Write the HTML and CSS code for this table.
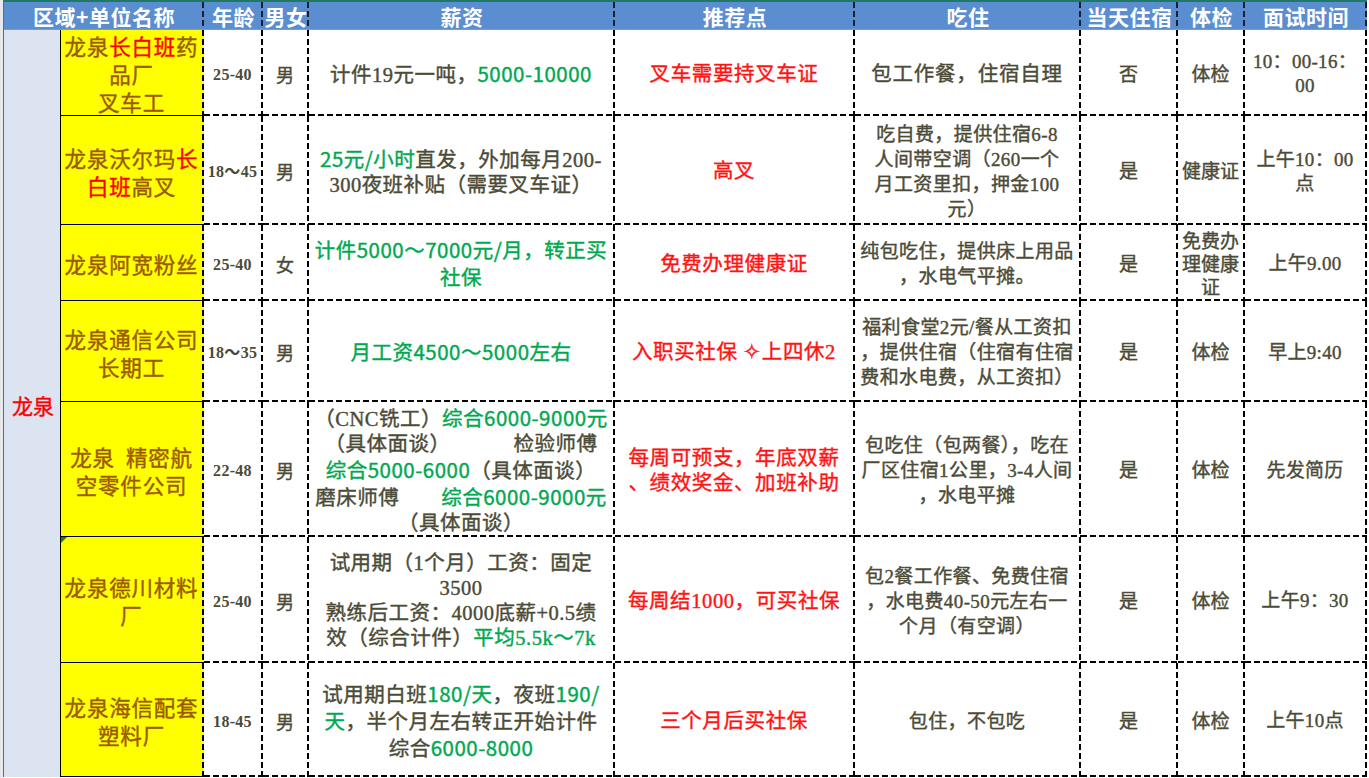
FILE: index.html
```html
<!DOCTYPE html>
<html lang="zh">
<head>
<meta charset="utf-8">
<title>龙泉招聘</title>
<link rel="stylesheet" href="styles.css">
</head>
<body>
<div class="page">
  <div class="strip"></div>
  <div class="sheet">
    <div class="h h-name">区域+单位名称</div>
    <div class="h">年龄</div>
    <div class="h">男女</div>
    <div class="h">薪资</div>
    <div class="h">推荐点</div>
    <div class="h">吃住</div>
    <div class="h">当天住宿</div>
    <div class="h">体检</div>
    <div class="h">面试时间</div>

    <div class="rg">龙泉</div>

    <!-- row 1 -->
    <div class="nm"><p>龙泉<span class="r">长白班</span>药<br>品厂<br>叉车工</p></div>
    <div class="c age"><p>25-40</p></div>
    <div class="c sex"><p>男</p></div>
    <div class="c sal"><p>计件19元一吨，<span class="g">5000-10000</span></p></div>
    <div class="c rec"><p>叉车需要持叉车证</p></div>
    <div class="c eat big"><p>包工作餐，住宿自理</p></div>
    <div class="c day"><p>否</p></div>
    <div class="c chk"><p>体检</p></div>
    <div class="c time"><p>10：00-16：<br>00</p></div>

    <!-- row 2 -->
    <div class="nm"><p>龙泉沃尔玛<span class="r">长</span><br><span class="r">白班</span>高叉</p></div>
    <div class="c age"><p>18～45</p></div>
    <div class="c sex"><p>男</p></div>
    <div class="c sal"><p><span class="g">25元/小时</span>直发，外加每月200-<br>300夜班补贴（需要叉车证）</p></div>
    <div class="c rec"><p>高叉</p></div>
    <div class="c eat"><p>吃自费，提供住宿6-8<br>人间带空调（260一个<br>月工资里扣，押金100<br>元）</p></div>
    <div class="c day"><p>是</p></div>
    <div class="c chk"><p>健康证</p></div>
    <div class="c time"><p>上午10：00<br>点</p></div>

    <!-- row 3 -->
    <div class="nm"><p>龙泉阿宽粉丝</p></div>
    <div class="c age"><p>25-40</p></div>
    <div class="c sex"><p>女</p></div>
    <div class="c sal"><p><span class="g">计件5000～7000元/月，转正买<br>社保</span></p></div>
    <div class="c rec"><p>免费办理健康证</p></div>
    <div class="c eat"><p>纯包吃住，提供床上用品<br>，水电气平摊。</p></div>
    <div class="c day"><p>是</p></div>
    <div class="c chk tight"><p>免费办<br>理健康<br>证</p></div>
    <div class="c time"><p>上午9.00</p></div>

    <!-- row 4 -->
    <div class="nm"><p>龙泉通信公司<br>长期工</p></div>
    <div class="c age"><p>18～35</p></div>
    <div class="c sex"><p>男</p></div>
    <div class="c sal"><p><span class="g">月工资4500～5000左右</span></p></div>
    <div class="c rec"><p>入职买社保 ✧上四休2</p></div>
    <div class="c eat"><p>福利食堂2元/餐从工资扣<br>，提供住宿（住宿有住宿<br>费和水电费，从工资扣）</p></div>
    <div class="c day"><p>是</p></div>
    <div class="c chk"><p>体检</p></div>
    <div class="c time"><p>早上9:40</p></div>

    <!-- row 5 -->
    <div class="nm"><p>龙泉&nbsp;&nbsp;精密航<br>空零件公司</p></div>
    <div class="c age"><p>22-48</p></div>
    <div class="c sex"><p>男</p></div>
    <div class="c sal"><p>（CNC铣工）<span class="g">综合6000-9000元</span><br>（具体面谈）&emsp;&emsp;&emsp;检验师傅<br><span class="g">综合5000-6000</span>（具体面谈）<br>磨床师傅&emsp;&emsp;<span class="g">综合6000-9000元</span><br>（具体面谈）</p></div>
    <div class="c rec"><p>每周可预支，年底双薪<br>、绩效奖金、加班补助</p></div>
    <div class="c eat"><p>包吃住（包两餐），吃在<br>厂区住宿1公里，3-4人间<br>，水电平摊</p></div>
    <div class="c day"><p>是</p></div>
    <div class="c chk"><p>体检</p></div>
    <div class="c time"><p>先发简历</p></div>

    <!-- row 6 -->
    <div class="nm flag"><p>龙泉德川材料<br>厂</p></div>
    <div class="c age"><p>25-40</p></div>
    <div class="c sex"><p>男</p></div>
    <div class="c sal"><p>试用期（1个月）工资：固定<br>3500<br>熟练后工资：4000底薪+0.5绩<br>效（综合计件）<span class="g gs">平均5.5k～7k</span></p></div>
    <div class="c rec"><p>每周结1000，可买社保</p></div>
    <div class="c eat"><p>包2餐工作餐、免费住宿<br>，水电费40-50元左右一<br>个月（有空调）</p></div>
    <div class="c day"><p>是</p></div>
    <div class="c chk"><p>体检</p></div>
    <div class="c time"><p>上午9：30</p></div>

    <!-- row 7 -->
    <div class="nm"><p>龙泉海信配套<br>塑料厂</p></div>
    <div class="c age"><p>18-45</p></div>
    <div class="c sex"><p>男</p></div>
    <div class="c sal"><p>试用期白班<span class="g">180/天</span>，夜班<span class="g">190/</span><br><span class="g">天</span>，半个月左右转正开始计件<br>综合<span class="g">6000-8000</span></p></div>
    <div class="c rec"><p>三个月后买社保</p></div>
    <div class="c eat"><p>包住，不包吃</p></div>
    <div class="c day"><p>是</p></div>
    <div class="c chk"><p>体检</p></div>
    <div class="c time"><p>上午10点</p></div>
  </div>
</div>
</body>
</html>
```

FILE: styles.css
```css
html, body {
  margin: 0;
  padding: 0;
  background: #ffffff;
}

p {
  margin: 0;
}

.page {
  display: flex;
  width: 1369px;
  height: 778px;
  overflow: hidden;
}

.strip {
  width: 3px;
  flex: none;
  background: #e6e8eb;
}

.sheet {
  display: grid;
  grid-template-columns: 56px 144px 59px 46px 306px 240px 226px 97px 67px 122px;
  grid-template-rows: 28px 86px 109px 76px 101px 135px 126px 114px;
  border-top: 2px solid #1f7a63;
  border-left: 1px solid #2a8a5a;
  align-self: flex-start;
  font-family: "Liberation Serif", "Noto Sans CJK SC", serif;
  color: #4b4b37;
  -webkit-text-stroke: 0.4px currentColor;
}

/* header */
.h {
  display: flex;
  align-items: center;
  justify-content: center;
  background-color: #5b8dd1;
  color: #ffffff;
  font-family: "Noto Sans CJK SC", sans-serif;
  font-weight: 700;
  font-size: 21px;
  -webkit-text-stroke: 0;
  border-bottom: 1px solid #8c99ab;
  background-image: repeating-linear-gradient(180deg, #1b1f2e 0 6px, transparent 6px 9px);
  background-size: 2px 100%;
  background-position: right top;
  background-repeat: no-repeat;
  white-space: nowrap;
  letter-spacing: 0.5px;
  padding-top: 1px;
}

.h-name {
  grid-column: 1 / span 2;
}

/* region column */
.rg {
  grid-column: 1;
  grid-row: 2 / span 7;
  background: #dbe4f0;
  color: #ff0000;
  font-family: "Noto Sans CJK SC", sans-serif;
  font-size: 21px;
  display: flex;
  align-items: center;
  justify-content: center;
  padding: 2px 0 0 2px;
}

/* name column */
.nm {
  grid-column: 2;
  position: relative;
  display: flex;
  align-items: center;
  justify-content: center;
  text-align: center;
  background-color: #ffff00;
  color: #9c5a00;
  font-family: "Noto Sans CJK SC", sans-serif;
  font-size: 21.5px;
  line-height: 28px;
  letter-spacing: 0.8px;
  border-left: 1px solid #000;
  border-bottom: 1px solid #000;
  background-image: repeating-linear-gradient(180deg, #000 0 6px, transparent 6px 9px);
  background-size: 2px 100%;
  background-position: right top;
  background-repeat: no-repeat;
  padding: 3px 2px 0 0;
}

.flag::before {
  content: "";
  position: absolute;
  left: 0;
  top: 0;
  border-top: 6px solid #1f7a3a;
  border-right: 6px solid transparent;
}

/* dashed cells */
.c {
  display: flex;
  align-items: center;
  justify-content: center;
  text-align: center;
  background-image:
    repeating-linear-gradient(90deg, #000 0 6px, transparent 6px 9px),
    repeating-linear-gradient(180deg, #000 0 6px, transparent 6px 9px);
  background-size: 100% 2px, 2px 100%;
  background-position: left bottom, right top;
  background-repeat: no-repeat;
  padding: 4px 2px 2px 0;
  line-height: 25px;
}

.age {
  font-size: 16px;
  font-weight: 700;
  -webkit-text-stroke: 0;
  letter-spacing: 0.3px;
}

.sex {
  font-family: "Noto Sans CJK SC", sans-serif;
  font-size: 18px;
}

.sal {
  font-size: 20.5px;
  letter-spacing: 0.5px;
}

.rec {
  font-size: 20.5px;
  letter-spacing: 0.6px;
  color: #ff1414;
}

.eat {
  font-size: 19px;
  letter-spacing: 0.4px;
  line-height: 25px;
}

.eat.big {
  font-size: 20.5px;
  letter-spacing: 0.8px;
}

.day, .chk, .time {
  font-size: 19px;
}

.chk.tight {
  line-height: 23px;
}

.time {
  line-height: 24px;
  letter-spacing: 0.3px;
}

.r {
  color: #ff0000;
}

.g {
  color: #00a850;
  font-family: "Noto Sans CJK SC", sans-serif;
}

.gs {
  font-family: "Liberation Serif", "Noto Sans CJK SC", serif;
}
```
